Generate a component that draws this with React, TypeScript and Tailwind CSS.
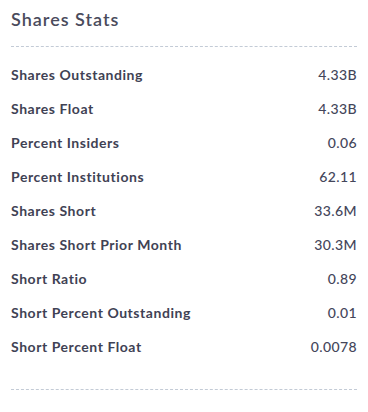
import React from "react";

const stats: [string, string][] = [
  ["Shares Outstanding", "4.33B"],
  ["Shares Float", "4.33B"],
  ["Percent Insiders", "0.06"],
  ["Percent Institutions", "62.11"],
  ["Shares Short", "33.6M"],
  ["Shares Short Prior Month", "30.3M"],
  ["Short Ratio", "0.89"],
  ["Short Percent Outstanding", "0.01"],
  ["Short Percent Float", "0.0078"],
];

export default function App() {
  return (
    <div className="w-[368px] h-[412px] bg-white px-[11px] font-['Lato','Liberation_Sans',sans-serif] text-[#3f4254]">
      <div className="pt-[5px] pb-[13px] border-b border-dashed border-[#c3cbd6]">
        <h2 className="text-[18px] leading-[28px] font-semibold tracking-[1px] text-[#4a4b5c]">Shares Stats</h2>
      </div>
      <div className="pt-[11px] pb-[25px] border-b border-dashed border-[#c3cbd6]">
        {stats.map(([label, value]) => (
          <div key={label} className="flex items-center justify-between h-[34px] text-[14px] leading-[34px]">
            <span className="font-bold tracking-[0.55px]">{label}</span>
            <span className="font-medium tracking-[0.4px] text-[#44465a]">{value}</span>
          </div>
        ))}
      </div>
    </div>
  );
}
